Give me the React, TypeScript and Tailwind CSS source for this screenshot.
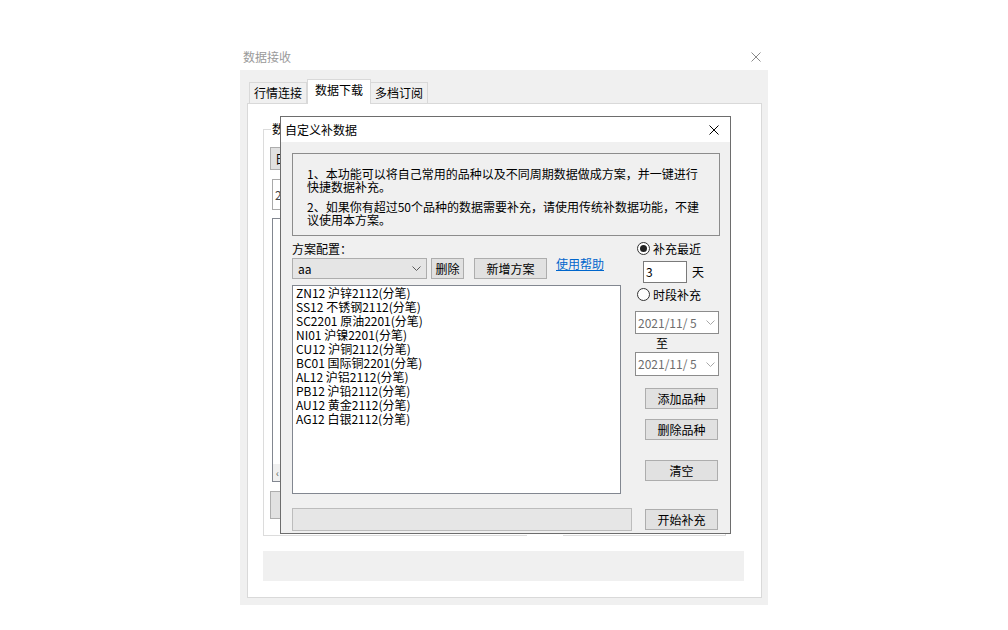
import React from 'react';

const items = [
  'ZN12 沪锌2112(分笔)',
  'SS12 不锈钢2112(分笔)',
  'SC2201 原油2201(分笔)',
  'NI01 沪镍2201(分笔)',
  'CU12 沪铜2112(分笔)',
  'BC01 国际铜2201(分笔)',
  'AL12 沪铝2112(分笔)',
  'PB12 沪铅2112(分笔)',
  'AU12 黄金2112(分笔)',
  'AG12 白银2112(分笔)',
];

function Btn({ children, className }: { children?: React.ReactNode; className: string }) {
  return (
    <div className={`flex items-center justify-center border border-[#adadad] bg-[#e1e1e1] leading-none text-black ${className}`}>
      {children}
    </div>
  );
}

function Radio({ checked }: { checked?: boolean }) {
  return (
    <span className="flex h-[13px] w-[13px] items-center justify-center rounded-full border border-[#333333] bg-white">
      {checked && <span className="h-[7px] w-[7px] rounded-full bg-[#222222]" />}
    </span>
  );
}

function Chevron({ className }: { className: string }) {
  return (
    <svg width="9" height="5" viewBox="0 0 9 5" className={className}>
      <path d="M0.5 0.5 L4.5 4.5 L8.5 0.5" fill="none" stroke="currentColor" strokeWidth="1" />
    </svg>
  );
}

function Close({ className }: { className: string }) {
  return (
    <svg width="10" height="10" viewBox="0 0 10 10" className={className}>
      <path d="M0.5 0.5 L9.5 9.5 M9.5 0.5 L0.5 9.5" fill="none" stroke="currentColor" strokeWidth="1" />
    </svg>
  );
}

function DatePick() {
  return (
    <div className="flex h-full w-[84px] items-center justify-between border border-[#8c8c8c] bg-white pl-[2px] pr-[3px] text-[#6d6d6d]">
      <span className="leading-[14px]">2021/11/ 5</span>
      <Chevron className="text-[#a8a8a8]" />
    </div>
  );
}

export default function App() {
  return (
    <div className="relative h-[630px] w-[1008px] overflow-hidden bg-white font-['Noto_Sans_CJK_SC',sans-serif] text-[12px] text-black">
      {/* main window */}
      <div className="absolute left-[240px] top-[44px] flex h-[561px] w-[528px] flex-col">
        <div className="flex h-[26px] items-center justify-between pl-[3px] pr-[7px] text-[#9a9a9a]">
          <span className="leading-[14px]">数据接收</span>
          <Close className="text-[#8a8a8a]" />
        </div>
        <div className="flex flex-1 flex-col bg-[#f0f0f0] pb-[7px] pl-[7px] pr-[6px] pt-[9px]">
          <div className="flex h-[24px] items-end pl-[2px]">
            <div className="flex h-[21px] w-[58px] items-center justify-center border border-b-0 border-[#d9d9d9] bg-[#f0f0f0] leading-[14px]">
              行情连接
            </div>
            <div className="relative z-10 -mb-px flex h-[25px] w-[64px] justify-center border border-b-0 border-[#d9d9d9] bg-white pt-[3px] leading-[14px]">
              数据下载
            </div>
            <div className="flex h-[21px] w-[57px] items-center justify-center border border-b-0 border-l-0 border-[#d9d9d9] bg-[#f0f0f0] leading-[14px]">
              多档订阅
            </div>
          </div>
          <div className="flex flex-1 flex-col border border-[#d9d9d9] bg-white pl-[15px] pt-[25px]">
            <div className="relative flex h-[407px] w-[463px] flex-col border border-[#dcdcdc]">
              {/* legend is mostly hidden behind the dialog */}
              <span className="absolute -top-[8px] left-[7px] w-[10px] overflow-hidden whitespace-nowrap bg-white pl-px leading-[14px]">数</span>
              <span className="absolute -bottom-px left-[263px] h-px w-[36px] bg-white" />
              <Btn className="ml-[6px] mt-[17px] h-[23px] w-[120px] justify-start pl-[4px]">日</Btn>
              <div className="ml-[8px] mt-[9px] flex h-[31px] w-[300px] items-center border border-[#a9a9a9] pl-[2px] text-[#444444]">
                2
              </div>
              <div className="ml-[8px] mt-[8px] flex h-[264px] w-[420px] flex-col justify-end border border-[#828790] bg-white">
                <div className="flex h-[17px] items-center bg-[#f0f0f0] pl-[3px] text-[10px] text-[#606060]">‹</div>
              </div>
              <Btn className="ml-[6px] mt-[9px] h-[28px] w-[120px]" />
            </div>
            <div className="mt-[15px] h-[30px] w-[481px] bg-[#f0f0f0]" />
          </div>
        </div>
      </div>

      {/* custom supplement dialog */}
      <div className="absolute left-[280px] top-[116px] flex h-[418px] w-[451px] flex-col border border-[#6d6d6d]">
        <div className="flex h-[25px] items-center justify-between bg-white pl-[4px] pr-[11px]">
          <span className="leading-[14px]">自定义补数据</span>
          <Close className="text-black" />
        </div>
        <div className="flex flex-1 flex-col bg-[#f0f0f0] pl-[11px] pt-[11px]">
          <div className="h-[83px] w-[428px] border border-[#8c8c8c] pl-[14px] pt-[13px] leading-[13px]">
            <p>
              1、本功能可以将自己常用的品种以及不同周期数据做成方案，并一键进行
              <br />
              快捷数据补充。
            </p>
            <p className="mt-[7px]">
              2、如果你有超过50个品种的数据需要补充，请使用传统补数据功能，不建
              <br />
              议使用本方案。
            </p>
          </div>

          <div className="flex">
            <div className="flex w-[329px] flex-col">
              <span className="mt-[6px] leading-[14px]">方案配置：</span>
              <div className="mt-[2px] flex h-[21px] items-start">
                <div className="flex h-[21px] w-[135px] items-center justify-between border border-[#adadad] bg-[#e5e5e5] pl-[5px] pr-[5px]">
                  <span className="leading-[14px]">aa</span>
                  <Chevron className="text-[#5a5a5a]" />
                </div>
                <Btn className="ml-[4px] h-[21px] w-[33px]">删除</Btn>
                <Btn className="ml-[10px] h-[21px] w-[73px]">新增方案</Btn>
                <a href="#" className="-mt-px ml-[9px] leading-[14px] text-[#0066cc] underline">
                  使用帮助
                </a>
              </div>
              <div className="mt-[6px] flex h-[209px] flex-col border border-[#828790] bg-white pl-[3px] leading-[14px]">
                {items.map((t) => (
                  <span key={t}>{t}</span>
                ))}
              </div>
            </div>

            <div className="ml-[14px] flex w-[84px] flex-col">
              <label className="ml-[2px] mt-[5px] flex h-[15px] items-center gap-[3px] leading-[14px]">
                <Radio checked />
                补充最近
              </label>
              <div className="ml-[8px] mt-[5px] flex h-[22px] items-center">
                <div className="flex h-[22px] w-[44px] items-center border border-[#7a7a7a] bg-white pl-[2px] leading-[14px]">3</div>
                <span className="ml-[5px] leading-[14px]">天</span>
              </div>
              <label className="ml-[2px] mt-[4px] flex h-[15px] items-center gap-[3px] leading-[14px]">
                <Radio />
                时段补充
              </label>
              <div className="mt-[9px] h-[23px]">
                <DatePick />
              </div>
              <span className="mt-[2px] pl-[21px] leading-[14px]">至</span>
              <div className="mt-[2px] h-[24px]">
                <DatePick />
              </div>
              <Btn className="ml-[10px] mt-[12px] h-[21px] w-[73px]">添加品种</Btn>
              <Btn className="ml-[10px] mt-[10px] h-[21px] w-[73px]">删除品种</Btn>
              <Btn className="ml-[10px] mt-[20px] h-[21px] w-[73px]">清空</Btn>
            </div>
          </div>

          <div className="mt-[14px] flex items-center">
            <div className="h-[23px] w-[340px] border border-[#bcbcbc] bg-[#e6e6e6]" />
            <Btn className="ml-[13px] h-[21px] w-[73px]">开始补充</Btn>
          </div>
        </div>
      </div>
    </div>
  );
}
